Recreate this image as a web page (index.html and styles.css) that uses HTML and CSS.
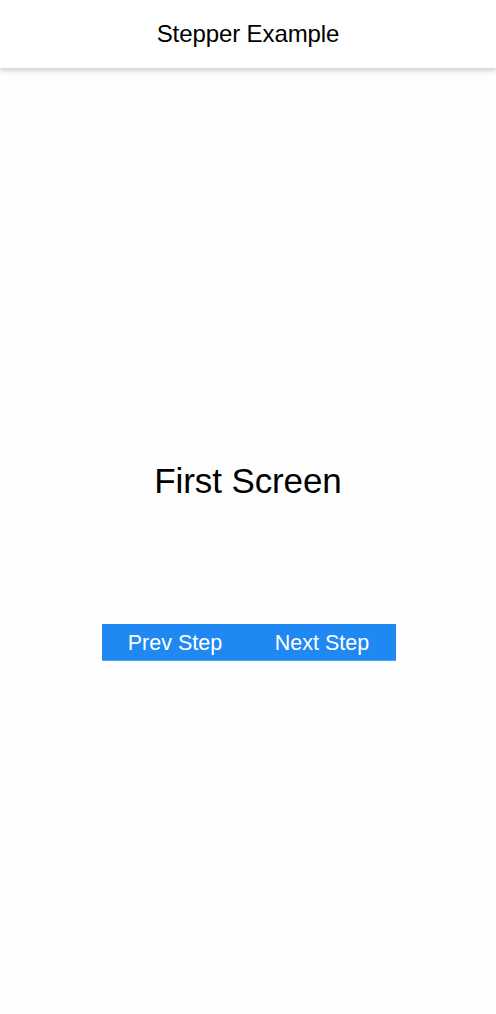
FILE: index.html
```html
<!DOCTYPE html>
<html>
<head>
<meta charset="utf-8">
<link rel="stylesheet" href="styles.css">
</head>
<body>
<header class="app-header">
  <h1 class="app-title">Stepper Example</h1>
</header>
<main class="screen">
  <div class="screen-title">First Screen</div>
  <div class="stepper-bar">
    <button class="step-btn">Prev Step</button>
    <button class="step-btn">Next Step</button>
  </div>
</main>
</body>
</html>
```
FILE: styles.css
```css
html, body {
  margin: 0;
  padding: 0;
  background: #fefefe;
  font-family: "Liberation Sans", Arial, sans-serif;
  color: #000;
}
body {
  width: 496px;
  height: 1014px;
  overflow: hidden;
}
.app-header {
  height: 68px;
  background: #fff;
  display: flex;
  align-items: center;
  justify-content: center;
  box-shadow: 0 2px 6px rgba(0, 0, 0, 0.22);
  position: relative;
  z-index: 1;
}
.app-title {
  margin: 0;
  font-size: 24px;
  font-weight: normal;
  letter-spacing: -0.1px;
}
.screen {
  display: flex;
  flex-direction: column;
  align-items: center;
  padding-top: 393px;
}
.screen-title {
  font-size: 35px;
  line-height: 40px;
  letter-spacing: -0.1px;
}
.stepper-bar {
  margin-top: 123px;
  width: 294px;
  height: 37px;
  margin-left: 1px;
  padding-top: 2px;
  background: #1f88f2;
  display: flex;
  align-items: center;
  justify-content: space-around;
  box-sizing: border-box;
  border-bottom: 1px solid #4ba6f7;
}
.step-btn {
  background: none;
  border: none;
  color: #fff;
  font-family: inherit;
  font-size: 21.5px;
  padding: 0;
}
```
